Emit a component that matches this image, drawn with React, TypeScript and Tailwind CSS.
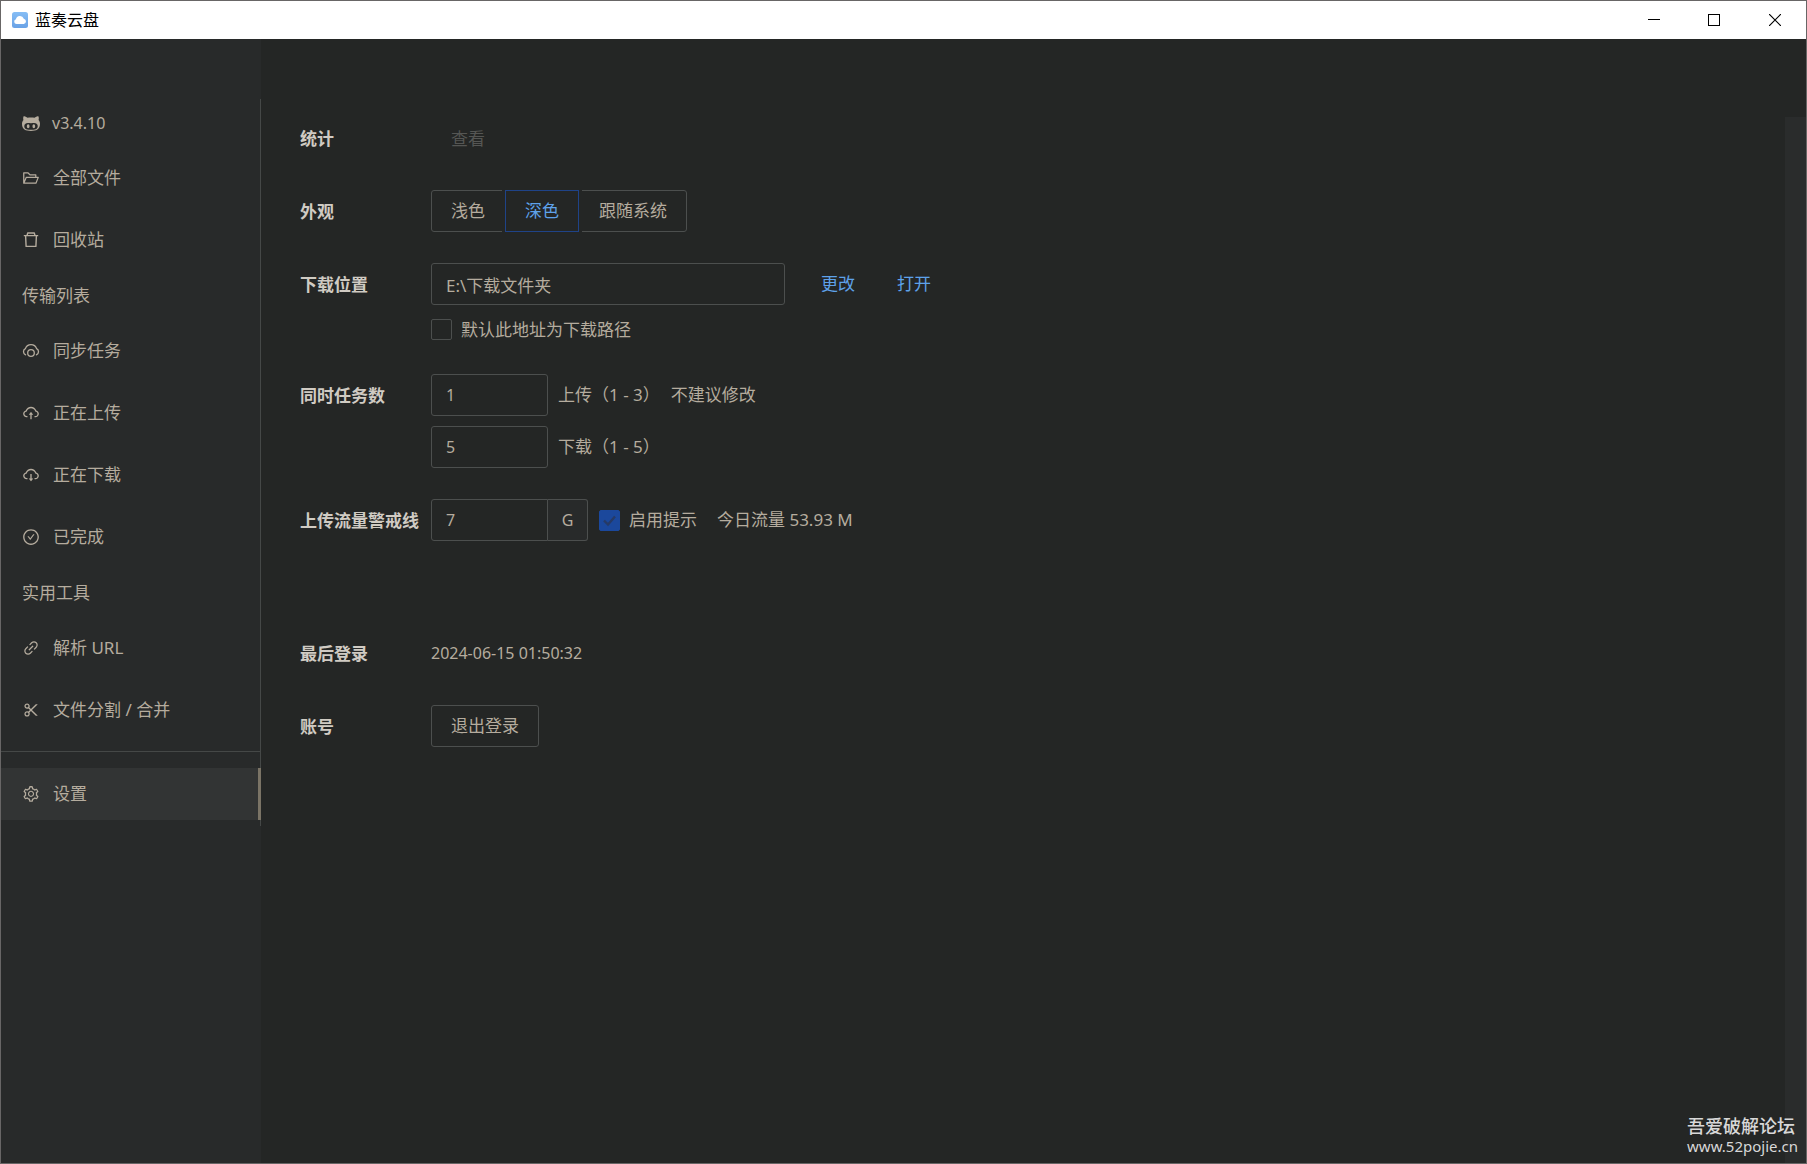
import { useState } from "react";
import type { ComponentType, ReactNode } from "react";
import {
  AiOutlineCheckCircle,
  AiOutlineCloudDownload,
  AiOutlineCloudUpload,
  AiOutlineFolderOpen,
  AiOutlineLink,
  AiOutlineScissor,
  AiOutlineSetting,
} from "react-icons/ai";

interface IconProps {
  className?: string;
}

interface NavItem {
  id: string;
  label: string;
  icon: ComponentType<IconProps>;
}

interface NavGroup {
  title?: string;
  items: NavItem[];
}

function OctofaceIcon({ className }: IconProps) {
  return (
    <svg viewBox="0 0 16 16" fill="currentColor" className={className} aria-hidden="true">
      <path
        fillRule="evenodd"
        d="M14.7 5.34c.13-.32.55-1.59-.13-3.31 0 0-1.05-.33-3.44 1.3-1-.28-2.07-.32-3.13-.32s-2.13.04-3.13.32c-2.39-1.64-3.44-1.3-3.44-1.3-.68 1.72-.26 2.99-.13 3.31C.49 6.21 0 7.33 0 8.69 0 13.84 3.33 15 7.98 15S16 13.84 16 8.69c0-1.36-.49-2.48-1.3-3.35zM8 14.02c-3.3 0-5.98-.15-5.98-3.35 0-.76.38-1.48 1.02-2.07 1.07-.98 2.9-.46 4.96-.46 2.07 0 3.88-.52 4.96.46.65.59 1.02 1.3 1.02 2.07 0 3.19-2.68 3.35-5.98 3.35zM5.49 9.01c-.66 0-1.2.8-1.2 1.78s.54 1.79 1.2 1.79c.66 0 1.2-.8 1.2-1.79s-.54-1.78-1.2-1.78zm5.02 0c-.66 0-1.2.79-1.2 1.78s.54 1.79 1.2 1.79c.66 0 1.2-.8 1.2-1.79s-.53-1.78-1.2-1.78z"
      />
    </svg>
  );
}

function TrashIcon({ className }: IconProps) {
  return (
    <svg viewBox="0 0 18 18" fill="none" stroke="currentColor" strokeWidth="1.4" className={className} aria-hidden="true">
      <path d="M1.8 4.6h14.4M5 4.6l.7-2.6h6.6l.7 2.6M3.6 4.6l.5 10.8h9.8l.5-10.8" strokeLinejoin="round" />
    </svg>
  );
}

function CloudSyncIcon({ className }: IconProps) {
  return (
    <svg viewBox="0 0 18 18" fill="none" stroke="currentColor" strokeWidth="1.3" className={className} aria-hidden="true">
      <path d="M3.6 12.8A3.4 3.4 0 0 1 3.4 6.6a5.9 5.9 0 0 1 11.2 0 3.4 3.4 0 0 1-.2 6.2" strokeLinecap="round" />
      <circle cx="9" cy="11" r="3.3" />
    </svg>
  );
}

function CloudLogo({ className }: IconProps) {
  return (
    <svg viewBox="0 0 16 16" className={className} aria-hidden="true">
      <defs>
        <linearGradient id="logo-sky" x1="0" y1="0" x2="0" y2="1">
          <stop offset="0" stopColor="#85bdf5" />
          <stop offset="1" stopColor="#6aa2e6" />
        </linearGradient>
      </defs>
      <rect width="16" height="16" rx="2.5" fill="url(#logo-sky)" />
      <path d="M4.6 12a2.4 2.4 0 0 1-.7-4.7 4.1 4.1 0 0 1 7.9-.6A2.7 2.7 0 0 1 11.8 12z" fill="#fff" />
    </svg>
  );
}

const navGroups: NavGroup[] = [
  {
    items: [
      { id: "files", label: "全部文件", icon: AiOutlineFolderOpen },
      { id: "recycle", label: "回收站", icon: TrashIcon },
    ],
  },
  {
    title: "传输列表",
    items: [
      { id: "sync", label: "同步任务", icon: CloudSyncIcon },
      { id: "upload", label: "正在上传", icon: AiOutlineCloudUpload },
      { id: "download", label: "正在下载", icon: AiOutlineCloudDownload },
      { id: "done", label: "已完成", icon: AiOutlineCheckCircle },
    ],
  },
  {
    title: "实用工具",
    items: [
      { id: "parse", label: "解析 URL", icon: AiOutlineLink },
      { id: "split", label: "文件分割 / 合并", icon: AiOutlineScissor },
    ],
  },
];

const themes = [
  { id: "light", label: "浅色" },
  { id: "dark", label: "深色" },
  { id: "system", label: "跟随系统" },
];

const inputClass =
  "h-[42px] rounded-[3px] border border-[#4c4f4e] bg-transparent px-[14px] text-[#b5ac9e] outline-none focus:border-[#1f4fa8]";

function TitleBar() {
  return (
    <header className="flex h-[38px] shrink-0 items-center bg-white pl-[11px] text-black">
      <CloudLogo className="size-4" />
      <h1 className="ml-[7px] flex-1 text-[16px]">蓝奏云盘</h1>
      <button aria-label="最小化" className="flex h-full w-[60px] items-center justify-center">
        <svg viewBox="0 0 12 12" className="size-3" stroke="currentColor" shapeRendering="crispEdges">
          <path d="M0 5.5h12" />
        </svg>
      </button>
      <button aria-label="最大化" className="flex h-full w-[60px] items-center justify-center">
        <svg viewBox="0 0 12 12" className="size-3" fill="none" stroke="currentColor" shapeRendering="crispEdges">
          <path d="M.5.5h11v11H.5z" />
        </svg>
      </button>
      <button aria-label="关闭" className="flex h-full w-[62px] items-center justify-center">
        <svg viewBox="0 0 12 12" className="size-3" stroke="currentColor" strokeWidth="1.2">
          <path d="M0 0l12 12M12 0L0 12" />
        </svg>
      </button>
    </header>
  );
}

interface NavButtonProps {
  item: NavItem;
  active: boolean;
  onSelect: (id: string) => void;
}

function NavButton({ item, active, onSelect }: NavButtonProps) {
  const Icon = item.icon;
  return (
    <button
      onClick={() => onSelect(item.id)}
      className={`flex h-[52px] items-center gap-[13px] pl-[21px] text-left ${
        active ? "w-[calc(100%+1px)] border-r-[3px] border-[#7b7466] bg-[#323434]" : "w-full"
      }`}
    >
      <Icon className="size-[18px]" />
      {item.label}
    </button>
  );
}

function Sidebar() {
  const [current, setCurrent] = useState("settings");

  return (
    <aside className="w-[260px] shrink-0 bg-[#282a2a] pt-[60px]">
      <nav className="border-r border-[#454847] pb-[6px]">
        <a href="#version" className="flex h-[53px] items-center gap-3 pb-[5px] pl-[21px]">
          <OctofaceIcon className="size-[18px]" />
          <span className="text-[16px]">v3.4.10</span>
        </a>
        {navGroups.map((group, idx) => (
          <div key={idx}>
            {group.title && <h2 className="flex h-[59px] items-center pl-[21px]">{group.title}</h2>}
            <div className="flex flex-col gap-[10px]">
              {group.items.map((item) => (
                <NavButton key={item.id} item={item} active={current === item.id} onSelect={setCurrent} />
              ))}
            </div>
          </div>
        ))}
        <hr className="mt-[15px] mb-4 border-[#454847]" />
        <NavButton
          item={{ id: "settings", label: "设置", icon: AiOutlineSetting }}
          active={current === "settings"}
          onSelect={setCurrent}
        />
      </nav>
    </aside>
  );
}

interface CheckboxProps {
  label: string;
  defaultChecked?: boolean;
}

function Checkbox({ label, defaultChecked }: CheckboxProps) {
  return (
    <label className="flex items-center gap-[9px]">
      <span className="relative flex">
        <input
          type="checkbox"
          defaultChecked={defaultChecked}
          className="peer size-[21px] appearance-none rounded-[2px] border border-[#4c4f4e] checked:border-[#1b489c] checked:bg-[#1b489c]"
        />
        <svg
          viewBox="0 0 21 21"
          fill="none"
          stroke="#263a66"
          strokeWidth="2.4"
          className="pointer-events-none absolute inset-0 hidden size-[21px] peer-checked:block"
        >
          <path d="M5 10.5l4 4 7-8" />
        </svg>
      </span>
      {label}
    </label>
  );
}

interface RowProps {
  label: string;
  children: ReactNode;
}

function Row({ label, children }: RowProps) {
  return (
    <div className="flex items-start">
      <h3 className="flex h-11 w-[131px] shrink-0 items-center font-bold whitespace-nowrap text-[#d0cbc3]">
        {label}
      </h3>
      <div className="flex-1">{children}</div>
    </div>
  );
}

function Settings() {
  const [theme, setTheme] = useState("dark");

  return (
    <div className="flex flex-1 flex-col gap-[29px] pl-[39px]">
      <Row label="统计">
        <button disabled className="h-11 px-5 text-[#555654]">
          查看
        </button>
      </Row>

      <Row label="外观">
        <div className="flex">
          {themes.map(({ id, label }) => (
            <button
              key={id}
              onClick={() => setTheme(id)}
              className={`h-[42px] border px-[19px] first:rounded-l-[3px] last:rounded-r-[3px] ${
                theme === id
                  ? "z-10 border-[#1f4388] text-[#5ea2ea] shadow-[0_0_0_3px_#242625]"
                  : "border-[#4c4f4e]"
              }`}
            >
              {label}
            </button>
          ))}
        </div>
      </Row>

      <Row label="下载位置">
        <div className="flex items-center">
          <input aria-label="下载位置" defaultValue="E:\下载文件夹" className={`w-[354px] ${inputClass}`} />
          <button className="ml-9 text-[#5ea2ea]">更改</button>
          <button className="ml-[42px] text-[#5ea2ea]">打开</button>
        </div>
        <div className="mt-3 mb-[3px] flex h-[25px] items-center">
          <Checkbox label="默认此地址为下载路径" />
        </div>
      </Row>

      <Row label="同时任务数">
        <div className="mb-[2px] flex flex-col gap-[10px]">
          <div className="flex items-center">
            <input id="upload-count" defaultValue="1" className={`w-[117px] text-[16px] ${inputClass}`} />
            <label htmlFor="upload-count" className="ml-[10px]">
              上传（1 - 3）
            </label>
            <span className="ml-[11px]">不建议修改</span>
          </div>
          <div className="flex items-center">
            <input id="download-count" defaultValue="5" className={`w-[117px] text-[16px] ${inputClass}`} />
            <label htmlFor="download-count" className="ml-[10px]">
              下载（1 - 5）
            </label>
          </div>
        </div>
      </Row>

      <Row label="上传流量警戒线">
        <div className="flex items-center">
          <input
            aria-label="上传流量警戒线"
            defaultValue="7"
            className={`w-[117px] rounded-r-none text-[16px] ${inputClass}`}
          />
          <span className="flex h-[42px] w-10 items-center justify-center rounded-r-[3px] border border-l-0 border-[#4c4f4e] bg-[#282a2a] text-[16px]">
            G
          </span>
          <div className="ml-[11px]">
            <Checkbox label="启用提示" defaultChecked />
          </div>
          <span className="ml-5">今日流量 53.93 M</span>
        </div>
      </Row>

      <div className="mt-[60px]">
        <Row label="最后登录">
          <time className="flex h-[42px] items-center text-[16px]">2024-06-15 01:50:32</time>
        </Row>
      </div>

      <Row label="账号">
        <button className="h-[42px] rounded-[3px] border border-[#4c4f4e] px-[19px]">退出登录</button>
      </Row>
    </div>
  );
}

export default function App() {
  return (
    <div className="relative flex min-h-screen flex-col border border-[#686666] bg-[#242625] font-['Noto_Sans','Noto_Sans_CJK_SC',sans-serif] text-[17px] leading-6 text-[#b5ac9e]">
      <TitleBar />
      <div className="flex flex-1">
        <Sidebar />
        <main className="flex flex-1 flex-col pt-[78px]">
          <div className="flex flex-1">
            <Settings />
            {/* Scrollbar track */}
            <div className="w-[21px] bg-[#2a2c2c]" />
          </div>
        </main>
      </div>

      {/* Watermark */}
      <div className="absolute right-2 bottom-[7px] leading-5 text-[#d8d8d8]">
        <p className="text-[18px] font-medium">吾爱破解论坛</p>
        <p className="text-[15px]">www.52pojie.cn</p>
      </div>
    </div>
  );
}
